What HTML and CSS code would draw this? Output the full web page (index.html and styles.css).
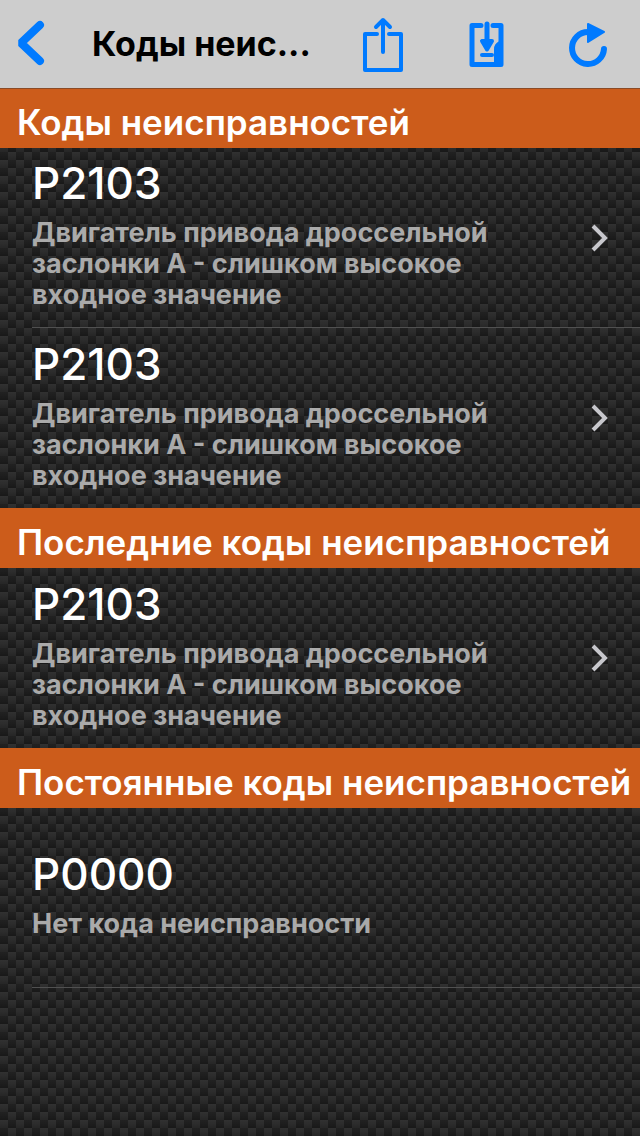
FILE: index.html
```html
<!DOCTYPE html>
<html lang="ru">

<head>
    <meta charset="UTF-8">
    <meta name="viewport" content="width=device-width, initial-scale=1.0">
    <title>Коды неисправностей</title>
    <link rel="stylesheet" href="styles.css">
</head>

<body>
    <header class="navbar">
        <button class="nav-btn" type="button" aria-label="Назад">
            <svg width="48" height="56" viewBox="0 0 48 56" fill="none" stroke="currentColor" stroke-width="8" stroke-linecap="round" stroke-linejoin="bevel">
                <path d="M40 9 L21 27 L40 45" />
            </svg>
        </button>
        <h1 class="nav-title">Коды неис...</h1>
        <div class="nav-actions">
            <button class="nav-btn" type="button" aria-label="Поделиться">
                <svg width="42" height="56" viewBox="0 0 42 56" fill="none" stroke="currentColor" stroke-width="4" stroke-linecap="round" stroke-linejoin="round">
                    <path d="M15 18 H3 V54 H39 V18 H27" />
                    <path d="M21 36 V4 M14 11 L21 4 L28 11" />
                </svg>
            </button>
            <button class="nav-btn" type="button" aria-label="Сохранить">
                <svg width="36" height="56" viewBox="0 0 36 56" fill="none" stroke="currentColor" stroke-width="5" stroke-linecap="round" stroke-linejoin="round">
                    <path d="M13 9.5 H4 V48.5 H33 V9.5 H25" />
                    <path d="M19 8 V30" />
                    <path d="M14 25 H24 L19 33.5 Z" fill="currentColor" stroke-width="4" />
                    <path d="M14 39 H24" stroke-width="4" />
                    <path d="M28 48 V33 Q28 29 32 27" stroke-width="4" />
                    <path d="M31 31 V48" stroke-width="2" />
                </svg>
            </button>
            <button class="nav-btn" type="button" aria-label="Обновить">
                <svg width="40" height="56" viewBox="0 0 40 56" fill="none" stroke="currentColor" stroke-width="6" stroke-linecap="round">
                    <path d="M20 16 A16 16 0 1 0 36 33" />
                    <path d="M20 8 L36 16 L20 26 Z" fill="currentColor" stroke-width="2" stroke-linejoin="round" />
                </svg>
            </button>
        </div>
    </header>

    <main>
        <section>
            <h2 class="section-title">Коды неисправностей</h2>
            <ul class="code-list">
                <li class="code-item">
                    <div class="code-info">
                        <h3 class="code">P2103</h3>
                        <p class="desc">Двигатель привода дроссельной заслонки А - слишком высокое входное значение</p>
                    </div>
                    <svg class="arrow" width="20" height="30" viewBox="0 0 20 30">
                        <path d="M3 3 L15 15 L3 27" />
                    </svg>
                </li>
                <li class="code-item">
                    <div class="code-info">
                        <h3 class="code">P2103</h3>
                        <p class="desc">Двигатель привода дроссельной заслонки А - слишком высокое входное значение</p>
                    </div>
                    <svg class="arrow" width="20" height="30" viewBox="0 0 20 30">
                        <path d="M3 3 L15 15 L3 27" />
                    </svg>
                </li>
            </ul>
        </section>

        <section>
            <h2 class="section-title">Последние коды неисправностей</h2>
            <ul class="code-list">
                <li class="code-item">
                    <div class="code-info">
                        <h3 class="code">P2103</h3>
                        <p class="desc">Двигатель привода дроссельной заслонки А - слишком высокое входное значение</p>
                    </div>
                    <svg class="arrow" width="20" height="30" viewBox="0 0 20 30">
                        <path d="M3 3 L15 15 L3 27" />
                    </svg>
                </li>
            </ul>
        </section>

        <section>
            <h2 class="section-title">Постоянные коды неисправностей</h2>
            <ul class="code-list">
                <li class="code-item last">
                    <div class="code-info">
                        <h3 class="code">P0000</h3>
                        <p class="desc">Нет кода неисправности</p>
                    </div>
                </li>
            </ul>
        </section>
    </main>
</body>

</html>
```
FILE: styles.css
```css
* {
    box-sizing: border-box;
    margin: 0;
    padding: 0;
}

/* carbon texture: 8px checkerboard, every cell fades down */
body {
    min-height: 100vh;
    font-family: Inter, "Liberation Sans", sans-serif;
    color: #fff;
    background-color: #222;
    background-image:
        linear-gradient(rgba(255, 255, 255, 0.02), rgba(0, 0, 0, 0.15)),
        conic-gradient(#1d1d1d 25%, #2d2d2d 0 50%, #1d1d1d 0 75%, #2d2d2d 0);
    background-size: 8px 8px, 16px 16px;
}

.navbar {
    position: relative;
    display: flex;
    align-items: center;
    height: 88px;
    padding-right: 32px;
    background: #cdcdcd;
    box-shadow: 0 1px 0 #8a4a26;
}

.nav-btn {
    display: flex;
    border: none;
    background: none;
    color: #007aff;
    cursor: pointer;
}

.nav-title {
    flex: 1;
    padding-left: 44px;
    font-size: 34px;
    font-weight: 700;
    line-height: 44px;
    color: #000;
    white-space: nowrap;
}

.nav-actions {
    display: flex;
    gap: 64px;
}

.section-title {
    height: 60px;
    padding: 6px 0 0 17px;
    font-size: 35px;
    font-weight: 600;
    line-height: 56px;
    white-space: nowrap;
    background: #cc5c1b;
}

.code-list {
    list-style: none;
}

.code-item {
    display: flex;
    align-items: center;
    min-height: 180px;
    margin-left: 32px;
    padding-right: 30px;
}

.code-item:not(:last-child),
.code-item.last {
    border-bottom: 1px solid #505050;
}

.code-info {
    flex: 1;
    padding: 0 80px 10px 0;
}

.code {
    margin-bottom: 6px;
    font-size: 44px;
    font-weight: 500;
    line-height: 56px;
}

.desc {
    font-size: 27px;
    font-weight: 700;
    line-height: 31px;
    color: #aaa;
}

.arrow {
    fill: none;
    stroke: #c7c7cc;
    stroke-width: 4;
}
```
